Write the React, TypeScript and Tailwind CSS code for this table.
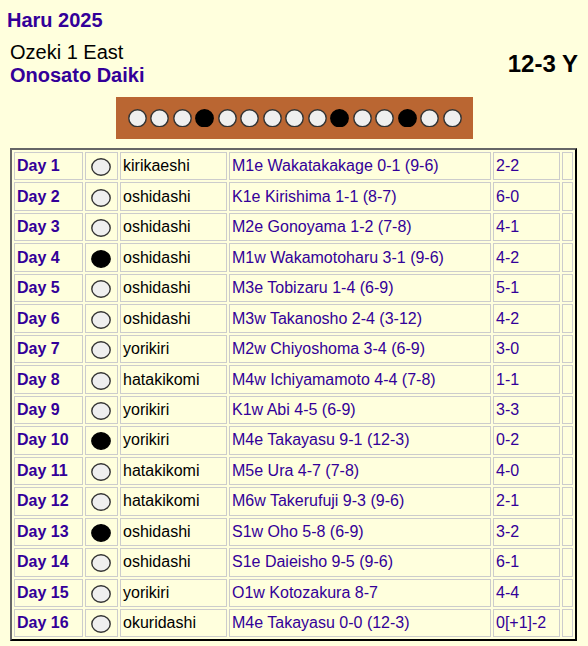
import React from "react";

const days = [
  { k: "kirikaeshi", o: "M1e Wakatakakage 0-1 (9-6)", r: "2-2", w: true },
  { k: "oshidashi", o: "K1e Kirishima 1-1 (8-7)", r: "6-0", w: true },
  { k: "oshidashi", o: "M2e Gonoyama 1-2 (7-8)", r: "4-1", w: true },
  { k: "oshidashi", o: "M1w Wakamotoharu 3-1 (9-6)", r: "4-2", w: false },
  { k: "oshidashi", o: "M3e Tobizaru 1-4 (6-9)", r: "5-1", w: true },
  { k: "oshidashi", o: "M3w Takanosho 2-4 (3-12)", r: "4-2", w: true },
  { k: "yorikiri", o: "M2w Chiyoshoma 3-4 (6-9)", r: "3-0", w: true },
  { k: "hatakikomi", o: "M4w Ichiyamamoto 4-4 (7-8)", r: "1-1", w: true },
  { k: "yorikiri", o: "K1w Abi 4-5 (6-9)", r: "3-3", w: true },
  { k: "yorikiri", o: "M4e Takayasu 9-1 (12-3)", r: "0-2", w: false },
  { k: "hatakikomi", o: "M5e Ura 4-7 (7-8)", r: "4-0", w: true },
  { k: "hatakikomi", o: "M6w Takerufuji 9-3 (9-6)", r: "2-1", w: true },
  { k: "oshidashi", o: "S1w Oho 5-8 (6-9)", r: "3-2", w: false },
  { k: "oshidashi", o: "S1e Daieisho 9-5 (9-6)", r: "6-1", w: true },
  { k: "yorikiri", o: "O1w Kotozakura 8-7", r: "4-4", w: true },
  { k: "okuridashi", o: "M4e Takayasu 0-0 (12-3)", r: "0[+1]-2", w: true },
];

const bar = days.slice(0, 15).map((d) => d.w);

function Dot({ win, w, h }: { win: boolean; w: number; h: number }) {
  return (
    <svg width={w} height={h} viewBox={`0 0 ${w} ${h}`} className="block">
      <ellipse
        cx={w / 2}
        cy={h / 2}
        rx={w / 2 - 0.8}
        ry={h / 2 - 0.8}
        fill={win ? "#efefef" : "#000000"}
        stroke={win ? "#333333" : "#000000"}
        strokeWidth={1.4}
      />
    </svg>
  );
}

export default function App() {
  return (
    <div className="min-h-[646px] bg-[#ffffdd] font-['Liberation_Sans',Arial,sans-serif] text-black">
      <div className="pl-[7px] pt-[9px] text-[20px] font-bold leading-[23px] text-[#330099]">
        Haru 2025
      </div>
      <div className="mt-[8.6px] flex items-center justify-between pl-[10px] pr-[10px]">
        <div className="text-[20px] leading-[23px]">
          <div>Ozeki 1 East</div>
          <div className="font-bold text-[#330099]">Onosato Daiki</div>
        </div>
        <div className="text-[24px] font-bold leading-[28px]">12-3 Y</div>
      </div>
      <div className="mt-[10.4px] flex justify-center">
        <div className="flex h-[42px] items-center gap-[3.5px] bg-[#ba6632] pl-[12px] pr-[11px]">
          {bar.map((w, i) => (
            <Dot key={i} win={w} w={19} h={18.5} />
          ))}
        </div>
      </div>
      <div className="mt-[9px] pl-[10px]">
        <table className="border-separate border-spacing-[2px] border-t-2 border-l-2 border-r-2 border-b-2 border-t-[#666666] border-l-[#666666] border-r-black border-b-black text-[16px] leading-[18px]">
          <tbody>
            {days.map((d, i) => (
              <tr key={i}>
                <td className="h-[28.47px] w-[69px] border border-[#cccccc] px-[2px] align-middle font-bold text-[#330099]">
                  Day {i + 1}
                </td>
                <td className="w-[33px] border border-[#cccccc] px-[2px] align-middle">
                  <div className="flex justify-center pt-[2px] pr-[1px]">
                    <Dot win={d.w} w={20} h={18} />
                  </div>
                </td>
                <td className="w-[107px] border border-[#cccccc] px-[2px] align-middle">{d.k}</td>
                <td className="w-[262px] border border-[#cccccc] px-[2px] align-middle text-[#330099]">{d.o}</td>
                <td className="w-[67px] border border-[#cccccc] px-[2px] align-middle text-[#330099]">{d.r}</td>
                <td className="w-[11px] border border-[#cccccc] px-[2px]"></td>
              </tr>
            ))}
          </tbody>
        </table>
      </div>
    </div>
  );
}
